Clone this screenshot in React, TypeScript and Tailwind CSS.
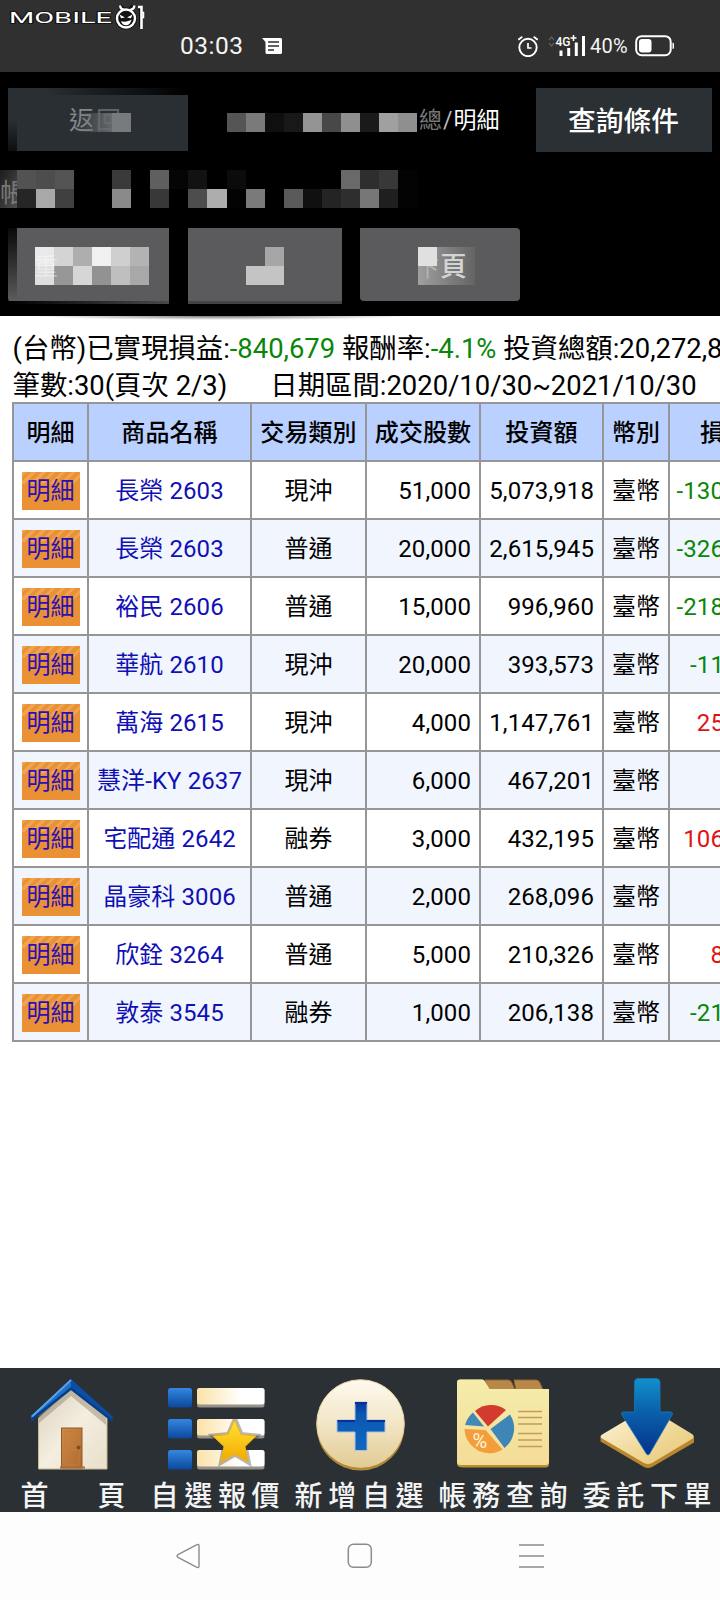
import type { ReactNode } from "react";

type Trade = {
  name: string;
  kind: string;
  shares: string;
  amount: string;
  profit: string;
};

const TRADES: Trade[] = [
  { name: "長榮 2603", kind: "現沖", shares: "51,000", amount: "5,073,918", profit: "-130" },
  { name: "長榮 2603", kind: "普通", shares: "20,000", amount: "2,615,945", profit: "-326" },
  { name: "裕民 2606", kind: "普通", shares: "15,000", amount: "996,960", profit: "-218" },
  { name: "華航 2610", kind: "現沖", shares: "20,000", amount: "393,573", profit: "-11" },
  { name: "萬海 2615", kind: "現沖", shares: "4,000", amount: "1,147,761", profit: "25" },
  { name: "慧洋-KY 2637", kind: "現沖", shares: "6,000", amount: "467,201", profit: "" },
  { name: "宅配通 2642", kind: "融券", shares: "3,000", amount: "432,195", profit: "106" },
  { name: "晶豪科 3006", kind: "普通", shares: "2,000", amount: "268,096", profit: "" },
  { name: "欣銓 3264", kind: "普通", shares: "5,000", amount: "210,326", profit: "8" },
  { name: "敦泰 3545", kind: "融券", shares: "1,000", amount: "206,138", profit: "-21" },
];

const HEADERS = ["明細", "商品名稱", "交易類別", "成交股數", "投資額", "幣別"];

// redaction blocks, one colour per cell
const ACCOUNT_TOP = ["#525252", "#4d4d4d", "#545454", "#000", "#000", "#3a3a3a", "#000", "#5f5f5f", "#050505", "#121212", "#000", "#0b0b0b", "#000", "#000", "#000", "#000", "#000", "#696969", "#2e2e2e", "#383838", "#030303"];
const ACCOUNT_BOTTOM = ["#262626", "#a8a8a8", "#404040", "#000", "#000", "#8a8a8a", "#000", "#383838", "#000", "#4d4d4d", "#adadad", "#030303", "#7a7a7a", "#000", "#5a5a5a", "#101010", "#242424", "#2e2e2e", "#777", "#1f1f1f", "#030303"];
const TITLE_BLOCKS = ["#555", "#7a7a7a", "#0f0f0f", "#181818", "#949494", "#484848", "#8f8f8f", "#1a1a1a", "#a0a0a0", "#8f8f8f"];
const BUTTON_TOP = ["#e9e9e9", "#d4d4d4", "#aeaeae", "#f0f0f0", "#cfcfcf", "#b3b3b3"];
const BUTTON_BOTTOM = ["#dedede", "#979797", "#d6d6d6", "#929292", "#bfbfbf", "#a8a8a8"];

function Blocks({ colors }: { colors: string[] }) {
  return (
    <div className="flex h-[19px]">
      {colors.map((c, i) => (
        <span key={i} className="h-full w-[19.05px] shrink-0" style={{ backgroundColor: c }} />
      ))}
    </div>
  );
}

function Logo() {
  return (
    <svg className="absolute left-[8px] top-[4px]" width="140" height="28" viewBox="8 4 140 28">
      <text
        x="9"
        y="23"
        textLength="103"
        lengthAdjust="spacingAndGlyphs"
        fontFamily="Roboto, sans-serif"
        fontSize="14"
        fontWeight="400"
        fill="#fff"
        stroke="#111"
        strokeWidth="1.4"
        paintOrder="stroke"
      >
        MOBILE
      </text>
      <g stroke="#111" strokeWidth="6" fill="#111" strokeLinejoin="round">
        <circle cx="126" cy="18.5" r="8" />
        <path d="M120 6l4 4M133 6l-3 4M138 8h3v19" strokeWidth="4" fill="none" />
      </g>
      <circle cx="126" cy="18.5" r="9" fill="#111" stroke="#fff" strokeWidth="2.4" />
      <path d="M120 5.5c.3 2.6 1.6 4 4.5 4.5M134.5 5.5c-.3 2.6-1.6 4-4.5 4.5" stroke="#fff" strokeWidth="2.2" fill="none" />
      <path d="M119.500 14.500l5.500 3-4 .8zM132.500 14.500l-5.500 3 4 .8z" fill="#fff" />
      <path d="M121 21.200c3.500 1 7.500.4 10.500-1.700-.8 4-3 5.800-5.600 5.800-2.300 0-4-1.500-4.900-4.100z" fill="#fff" />
      <path d="M138 7h3.500v22" stroke="#fff" strokeWidth="2.600" fill="none" />
      <path d="M142 12.500h1.500v5H142" stroke="#fff" strokeWidth="1.500" fill="none" />
    </svg>
  );
}

function StatusBar() {
  return (
    <div className="relative flex h-[72px] items-start bg-[#303030] text-[#f4f4f4]">
      <Logo />
      <span className="ml-[180px] mt-[31px] w-[82px] text-[24.500px] leading-[30px] tracking-[0.5px]">03:03</span>
      <svg className="mt-[37px]" width="21" height="18" viewBox="0 0 21 18">
        <path d="M0 1h18.500q1.500 0 1.500 1.500v13q0 1.500-1.500 1.500h-13.500q-1.500 0-1.500-1.500V5z" fill="#fff" />
        <path d="M6 5h11M6 9h11M6 13h6" stroke="#303030" strokeWidth="1.700" />
      </svg>
      <svg className="ml-[234px] mt-[35px]" width="22" height="22" viewBox="0 0 22 22" fill="none" stroke="#fff">
        <circle cx="11" cy="12.500" r="8.700" strokeWidth="1.900" />
        <path d="M11 8v5h3.500" strokeWidth="1.700" />
        <path d="M1.300 4.800L5.300 1.800M20.700 4.800l-4-3" strokeWidth="1.800" />
      </svg>
      <svg className="ml-[9px] mt-[34px]" width="39" height="23" viewBox="0 0 39 23">
        <path d="M1 6l2.500-3L6 6M1 9l2.500 3L6 9" fill="none" stroke="#5c5c5c" strokeWidth="1.300" />
        <text x="7.500" y="11.500" fontFamily="Roboto, sans-serif" fontSize="12.500" fontWeight="500" textLength="15" lengthAdjust="spacingAndGlyphs" fill="#fff">4G</text>
        <path d="M22.500 4h6M25.500 1v6" stroke="#fff" strokeWidth="1.500" />
        <path d="M13 16.500v5.500M20.700 14v8M28.300 8.500V22M35.500 2v20" stroke="#fff" strokeWidth="3" />
      </svg>
      <span className="ml-[3px] mt-[31px] w-[45px] text-[20px] leading-[30px] tracking-[0.3px]">40%</span>
      <svg className="mt-[35px]" width="40" height="22" viewBox="0 0 40 22">
        <rect x="1.200" y="1.200" width="34.500" height="19" rx="5.500" fill="none" stroke="#fff" strokeWidth="2" />
        <rect x="4" y="4" width="12.500" height="13.500" rx="3" fill="#fff" />
        <path d="M37.500 7.500q1.500 0 1.500 1.500v3.500q0 1.500-1.500 1.500z" fill="#fff" />
      </svg>
    </div>
  );
}

function TopPanel() {
  return (
    <div className="h-[244px] bg-black pt-4 text-white">
      <div className="flex h-16 pr-2">
        <div className="relative ml-2 h-[63px] w-[180px] bg-[#2a2f33]">
          <span className="absolute left-[61px] top-[17px] text-[25px] leading-[32px] text-[#85888a]">返</span>
          <span className="absolute left-[88px] top-[17px] text-[25px] leading-[32px] text-[#5f6366]">回</span>
          <div className="absolute left-[66px] top-[25px] h-[19px] w-[38px] bg-linear-to-r from-[#5a5e61]/0 to-[#6a6e71]/90" />
          <div className="absolute left-[104px] top-[25px] h-[19px] w-[19px] bg-[#777b7e]" />
          <div className="absolute inset-x-0 top-0 h-[7px] bg-linear-to-r from-transparent from-20% via-black/50 via-60% to-black" />
          <div className="absolute bottom-0 left-0 h-[32px] w-[9px] bg-linear-to-t from-[#0d0f10] to-transparent" />
        </div>
        <div className="relative flex w-[348px] items-center">
          <span className="ml-[231px] mt-[1px] flex text-[23px] leading-[32px]">
            <span className="text-[#777]">總</span>
            <span className="px-[1px] text-[#bbb]">/</span>
            明細
          </span>
          <div className="absolute left-[39px] top-[25px]">
            <Blocks colors={TITLE_BLOCKS} />
          </div>
        </div>
        <button className="h-16 flex-1 bg-[#2b3034] pt-[3px] pr-[1px] text-[27.700px] font-medium leading-none">查詢條件</button>
      </div>

      {/* account line */}
      <div className="relative mt-[18px] flex h-[38px]">
        <div className="h-full w-[17px] bg-linear-to-br from-[#1c1c1c] to-[#505050]" />
        <span className="absolute left-0 top-[7px] text-[26px] leading-[32px] text-[#777]">帳</span>
        <div className="relative">
          <Blocks colors={ACCOUNT_TOP} />
          <Blocks colors={ACCOUNT_BOTTOM} />
        </div>
      </div>

      <div className="ml-2 mt-5 flex">
        <div className="relative h-[76px] w-[161px] rounded-bl-md bg-[#5b5b5d] pl-[27px] pt-[19px]">
          <Blocks colors={BUTTON_TOP} />
          <Blocks colors={BUTTON_BOTTOM} />
          <span className="absolute left-[26px] top-[24px] w-[26px] text-[24px] leading-[30px] text-white/40">重</span>
          <div className="absolute left-0 top-0 h-[73px] w-[9px] rounded-bl-md bg-linear-to-b from-black/90 to-transparent" />
          <div className="absolute bottom-0 left-0 h-[3px] w-full bg-linear-to-r from-black to-black/20" />
        </div>
        <div className="relative ml-[19px] h-[76px] w-[153.500px] bg-[#5b5b5d]">
          <div className="absolute left-[76.500px] top-[19px] h-[19px] w-[19px] bg-[#a6a6a6]" />
          <div className="absolute left-[57.500px] top-[38px] h-[19px] w-[38px] bg-[#c4c4c4]" />
          <div className="absolute bottom-0 left-0 h-[3px] w-full bg-black/25" />
        </div>
        <div className="relative ml-[18.500px] h-[73px] w-[160px] rounded-r-[4px] rounded-bl-[4px] bg-[#5b5b5d]">
          <div className="absolute left-[58px] top-[19px] h-[38px] w-[57px] bg-linear-to-r from-[#a0a0a0] to-[#646464]" />
          <span className="absolute left-[57px] top-[29px] text-[22px] leading-[24px] text-[#b4b4b4]">下</span>
          <div className="absolute left-[58px] top-[19px] h-[19px] w-[19px] bg-[#e0e0e0]" />
          <span className="absolute left-[80px] top-[23px] text-[27px] font-medium leading-[32px] text-[#d4d4d4]">頁</span>
        </div>
      </div>
    </div>
  );
}

function Summary() {
  return (
    <div className="h-[86px] overflow-hidden whitespace-nowrap pl-[12.500px] text-[27.400px] leading-[37px] text-black">
      <div className="-ml-[12px] h-[15px]">
        <div className="ml-[30px] h-[4px] w-[380px] bg-[radial-gradient(ellipse_at_top,#777,#fff_70%)]" />
      </div>
      <p>
        (台幣)已實現損益:<span className="text-[#0a860a]">-840,679</span> 報酬率:<span className="text-[#0a860a]">-4.1%</span> 投資總額:20,272,8
      </p>
      <p>
        筆數:30(頁次 2/3)<span className="ml-[43px]">日期區間:2020/10/30~2021/10/30</span>
      </p>
    </div>
  );
}

function TradeTable() {
  return (
    <div className="h-[966px] overflow-hidden pl-[12px]">
      <table className="w-[738px] table-fixed border-collapse text-[24px] leading-[30px] tracking-[0.1px] text-black [&_td]:border-2 [&_td]:border-[#969696] [&_td]:p-0 [&_td]:pt-[2px] [&_th]:border-2 [&_th]:border-[#969696] [&_th]:p-0 [&_th]:pt-[2px]">
        <colgroup>
          <col className="w-[75px]" />
          <col className="w-[163px]" />
          <col className="w-[115px]" />
          <col className="w-[114px]" />
          <col className="w-[123px]" />
          <col className="w-[66px]" />
          <col className="w-[82px]" />
        </colgroup>
        <thead>
          <tr className="h-[58px] bg-[#bad0ff]">
            {HEADERS.map((h) => (
              <th key={h} className="font-medium">{h}</th>
            ))}
            <th className="text-right font-medium">
              <span className="mr-[26px]">損</span>
            </th>
          </tr>
        </thead>
        <tbody>
          {TRADES.map((t, i) => (
            <tr key={i} className={`h-[58px] ${i % 2 ? "bg-[#f1f6fe]" : "bg-white"}`}>
              <td>
                <div className="ml-[7.500px] h-[38px] w-[58px] bg-[#e99134] text-center leading-[38px] text-[#2a10b4]">
                  <div className="h-full bg-[repeating-linear-gradient(135deg,#efa54f_0_3px,transparent_3px_7px)] bg-[length:100%_12px] bg-no-repeat">
                    明細
                  </div>
                </div>
              </td>
              <td className="whitespace-nowrap text-center text-[#1010b4]">{t.name}</td>
              <td className="text-center">{t.kind}</td>
              <td className="text-right">
                <span className="mr-[8px]">{t.shares}</span>
              </td>
              <td className="text-right">
                <span className="mr-[8px]">{t.amount}</span>
              </td>
              <td className="text-center">臺幣</td>
              <td className={`text-right ${t.profit.startsWith("-") ? "text-[#0a860a]" : "text-[#de1414]"}`}>
                <span className="mr-[26px]">{t.profit}</span>
              </td>
            </tr>
          ))}
        </tbody>
      </table>
    </div>
  );
}

function HouseIcon() {
  return (
    <>
      <defs>
        <linearGradient id="wall" x2="1" y2="1">
          <stop stopColor="#d9d0bd" />
          <stop offset=".5" stopColor="#f4eee0" />
          <stop offset="1" stopColor="#e9dfc9" />
        </linearGradient>
        <linearGradient id="door" x2="1" y2="1">
          <stop stopColor="#cf8a45" />
          <stop offset="1" stopColor="#b06a30" />
        </linearGradient>
      </defs>
      <path d="M38.500 50L71 21l36 29v51H38.500z" fill="url(#wall)" stroke="#c7b892" />
      <path d="M39 55L71 28l35 29v-8L71 18 39 46z" fill="#8d8068" opacity=".45" />
      <rect x="61.500" y="60" width="20.500" height="40" fill="url(#door)" stroke="#8f5a2a" />
      <path d="M65 63.500h14v15H65zM65 82h14v15H65z" fill="none" stroke="#c07c3c" />
      <path d="M60 98.500h25v2H60z" fill="#b06a30" />
      <circle cx="78.500" cy="79.500" r="2" fill="#80501f" />
      <path d="M71 11L31 48v5.500L71 22z" fill="#1f70c6" />
      <path d="M71 11l41.500 37.500V54L71 22z" fill="#0b4ea5" />
      <path d="M31 53.500L71 22l41.500 32-.5-3L71 19 31 50.500z" fill="#083d8a" />
      <path d="M71 12L32 48.500" stroke="#57a5ea" strokeWidth="1.800" />
    </>
  );
}

function WatchlistIcon() {
  return (
    <>
      <defs>
        <linearGradient id="bar" x2="1">
          <stop stopColor="#fbe2a6" />
          <stop offset=".65" stopColor="#fff" />
        </linearGradient>
        <linearGradient id="box" x2="0" y2="1">
          <stop stopColor="#3387e0" />
          <stop offset="1" stopColor="#0c489b" />
        </linearGradient>
        <linearGradient id="star" x2="0" y2="1">
          <stop stopColor="#ffe534" />
          <stop offset="1" stopColor="#f5a800" />
        </linearGradient>
      </defs>
      {[20, 51, 82].map((y) => (
        <g key={y}>
          <rect x="24" y={y} width="24" height="19.500" rx="2.500" fill="url(#box)" />
          <rect x="53" y={y} width="67.500" height="19.500" rx="2.500" fill="#96928a" />
          <rect x="53" y={y} width="67.500" height="16.500" rx="2.500" fill="url(#bar)" />
        </g>
      ))}
      <path
        d="M91 52l6.200 14.500 15 1.500-11 10.500 3 15.500L91 86l-13.500 8 3-15.500-11.300-10.500 15.300-1.500z"
        fill="#333"
        opacity=".35"
        stroke="#333"
        strokeWidth="5"
      />
      <path d="M90.500 52l6.500 14.500 15 1.500-11 10.500 3 15.500L90.500 86 77 94l3-15.500L69 68l15-1.500z" fill="url(#star)" stroke="#eeb20c" />
    </>
  );
}

function AddIcon() {
  return (
    <>
      <defs>
        <linearGradient id="coin" x2="0" y2="1">
          <stop stopColor="#fffaf0" />
          <stop offset=".5" stopColor="#f2e6c6" />
          <stop offset="1" stopColor="#e2cb94" />
        </linearGradient>
        <linearGradient id="plus" x2="0" y2="1">
          <stop stopColor="#08359a" />
          <stop offset=".25" stopColor="#0a58b0" />
          <stop offset="1" stopColor="#1068c0" />
        </linearGradient>
      </defs>
      <circle cx="72.500" cy="58.500" r="44" fill="#b08a38" />
      <circle cx="72.500" cy="55.500" r="43.800" fill="url(#coin)" stroke="#e5d39e" />
      <path d="M67 34h12v18h18v12H79v18.500H67V64H49V52h18z" fill="url(#plus)" stroke="#aebfe0" strokeWidth="1" />
      <path d="M67 35h12M49.500 53H67M79 53h18" stroke="#08309a" strokeWidth="2" />
    </>
  );
}

function AccountIcon() {
  return (
    <>
      <defs>
        <linearGradient id="folder" x2="0" y2="1">
          <stop stopColor="#f5edac" />
          <stop offset="1" stopColor="#f4dc96" />
        </linearGradient>
      </defs>
      <path d="M53 12h23q3 0 4 3l3 7H56zM82 12h22q3 0 4 3l3 7H84z" fill="#b88848" stroke="#94672f" />
      <path d="M28 11.500h22q2 0 3 2L57.500 21H117v75q0 3.500-3.500 3.500h-82Q25 99.500 25 96V14.500q0-3 3-3z" fill="#b98f35" />
      <path d="M28 11.500h22q2 0 3 2L57.500 21H117v73q0 3-3.500 3h-85Q25 97 25 94V14.500q0-3 3-3z" fill="url(#folder)" />
      <path d="M56 58.500L43 43A25 25 0 0 1 74 42z" fill="#d23c2f" />
      <path d="M58.500 61L78 46.500A25 25 0 0 1 72.500 80z" fill="#3e86b8" />
      <path d="M52 58.500L33 57A25 25 0 0 1 41 44.500z" fill="#4389b5" />
      <path d="M53.500 62L70.500 81.500A25 25 0 0 1 32.500 61z" fill="#f29e3c" />
      <text x="40.500" y="79.500" fontFamily="Roboto, sans-serif" fontSize="20" fill="#fff6d8">%</text>
      <path d="M86 43.500h24M86 49.500h24M86 56h24M86 65.500h24M86 72h24M86 78.500h24" stroke="#c69a58" strokeWidth="1.500" />
    </>
  );
}

function OrderIcon() {
  return (
    <>
      <defs>
        <linearGradient id="plate" x2="1" y2="1">
          <stop stopColor="#fdf6e2" />
          <stop offset=".6" stopColor="#efd795" />
          <stop offset="1" stopColor="#e5c676" />
        </linearGradient>
        <linearGradient id="arrow" x2="0" y2="1">
          <stop stopColor="#1390cc" />
          <stop offset=".4" stopColor="#0a64ad" />
          <stop offset="1" stopColor="#04318b" />
        </linearGradient>
      </defs>
      <path d="M24.500 69v4.500L68 99q4 2 8 0l42-24.500V69z" fill="#b8862c" />
      <path d="M27 66l42-25q3-1.500 6 0l41 25q3.500 2.500 0 5L76 95q-4 2-8 0L27 71q-5-2.500 0-5z" fill="url(#plate)" />
      <path d="M62 10.500h18q4 0 4 4V44h11q2.500.5 1 3L73.500 86q-1.500 2-3 0L46 47q-1.500-2.500 1-3h11.500V14.500q0-4 3.500-4z" fill="url(#arrow)" stroke="#1478bd" strokeWidth=".8" />
    </>
  );
}

const TABS: { label: string; icon: ReactNode }[] = [
  { label: "首　頁", icon: <HouseIcon /> },
  { label: "自選報價", icon: <WatchlistIcon /> },
  { label: "新增自選", icon: <AddIcon /> },
  { label: "帳務查詢", icon: <AccountIcon /> },
  { label: "委託下單", icon: <OrderIcon /> },
];

function TabBar() {
  return (
    <div className="flex h-[144px] overflow-hidden bg-[#2b3034]">
      {TABS.map((tab, i) => (
        <div key={tab.label} className="w-[144px]">
          <svg width="144" height="108" viewBox="0 0 144 108">
            {tab.icon}
          </svg>
          <div
            className={`whitespace-nowrap pt-[2px] text-[28px] font-medium leading-[38px] text-[#f4f4f4] ${
              i === 0 ? "ml-[20.500px] tracking-[10.500px]" : "ml-[6.500px] tracking-[5.700px]"
            }`}
          >
            {tab.label}
          </div>
        </div>
      ))}
    </div>
  );
}

function SystemNav() {
  return (
    <div className="flex h-[88px] items-center justify-between bg-[#fdfdfd] px-[175px]">
      <svg width="26" height="26" viewBox="0 0 26 26" fill="none" stroke="#8c8c8c" strokeWidth="1.400">
        <path d="M21.500 1.800Q24 .6 24 3v20q0 2.400-2.500 1.200L3 14.300q-2-1.300 0-2.600z" />
      </svg>
      <svg width="26" height="26" viewBox="0 0 26 26" fill="none" stroke="#8c8c8c" strokeWidth="1.500">
        <rect x="1.300" y="1.300" width="23" height="23" rx="5" />
      </svg>
      <svg width="26" height="26" viewBox="0 0 26 26" stroke="#8c8c8c" strokeWidth="1.600">
        <path d="M0 2h25M0 13h25M0 24h25" />
      </svg>
    </div>
  );
}

export default function App() {
  return (
    <div className="h-[1600px] w-[720px] overflow-hidden bg-white font-[Roboto,'Noto_Sans_CJK_TC',sans-serif]">
      <StatusBar />
      <TopPanel />
      <Summary />
      <TradeTable />
      <TabBar />
      <SystemNav />
    </div>
  );
}
